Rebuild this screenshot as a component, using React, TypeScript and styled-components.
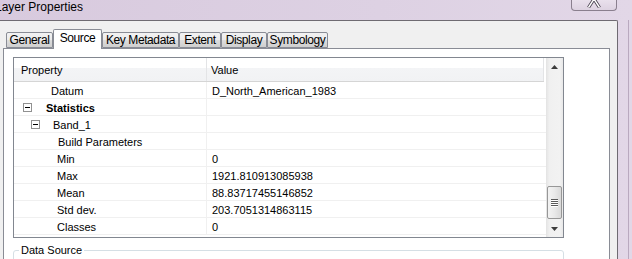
import React from 'react';
import styled, { createGlobalStyle } from 'styled-components';

const GlobalStyle = createGlobalStyle`
  html, body {
    margin: 0;
    padding: 0;
    background: #f0f0f0;
  }
  body {
    font-family: "Liberation Sans", Arial, sans-serif;
    font-size: 11px;
    color: #000;
  }
`;

const Window = styled.div`
  width: 632px;
  height: 259px;
  overflow: hidden;
  display: flex;
  flex-direction: column;
  background: linear-gradient(90deg, #d8cade 0%, #ddd1e3 60%, #e2d7e7 100%);
`;

const TitleBar = styled.div`
  height: 20px;
  flex: none;
  display: flex;
  align-items: flex-start;
  justify-content: space-between;
`;

const Title = styled.div`
  margin-left: -5px;
  font-size: 12px;
  line-height: 14px;
  color: #000;
`;

const CloseButton = styled.div`
  width: 44px;
  height: 10px;
  margin-right: 15px;
  border: 1px solid #8a7f8e;
  border-top: none;
  border-radius: 0 0 4px 4px;
  background: linear-gradient(#e9e0ec, #ddd2e1);
  display: flex;
  justify-content: center;
  align-items: flex-start;
`;

const Frame = styled.div`
  flex: 1;
  display: flex;
  min-height: 0;
`;

const Client = styled.div`
  width: 618px;
  flex: none;
  box-sizing: border-box;
  background: #f0f0f0;
  border-top: 1px solid #6f6b72;
  border-right: 1px solid #6f6b72;
  border-top-right-radius: 2px;
  display: flex;
  flex-direction: column;
`;

const SideFrame = styled.div`
  flex: 1;
  display: flex;
  justify-content: flex-end;
  padding-right: 3px;
`;

const SideLine = styled.div`
  width: 1px;
  background: #b9a9bf;
`;

const TabStrip = styled.div`
  height: 27px;
  flex: none;
  display: flex;
  align-items: flex-end;
  padding-left: 6px;
  position: relative;
  z-index: 1;
`;

const Tab = styled.div<{ $w: number; $active?: boolean }>`
  width: ${p => p.$w}px;
  height: ${p => (p.$active ? 20 : 16)}px;
  margin-bottom: ${p => (p.$active ? -1 : 0)}px;
  box-sizing: border-box;
  border: 1px solid #898c95;
  border-bottom: ${p => (p.$active ? 'none' : '1px solid #898c95')};
  border-radius: 2px 2px 0 0;
  background: ${p =>
    p.$active ? '#ffffff' : 'linear-gradient(#f2f2f2 0%, #ebebeb 50%, #dddddd 51%, #cfcfcf 100%)'};
  display: flex;
  align-items: center;
  justify-content: center;
  padding-bottom: ${p => (p.$active ? 3 : 0)}px;
  letter-spacing: -0.4px;
  font-size: 12px;
  white-space: nowrap;
`;

const TabPage = styled.div`
  margin-left: 3px;
  width: 607px;
  flex: 1;
  box-sizing: border-box;
  background: #ffffff;
  border: 1px solid #898c95;
  border-bottom: none;
  padding: 8px 0 0 9px;
`;

const Grid = styled.div`
  width: 551px;
  height: 181px;
  box-sizing: border-box;
  border: 1px solid #828790;
  display: flex;
`;

const Table = styled.div`
  flex: 1;
  display: flex;
  flex-direction: column;
`;

const HeaderRow = styled.div`
  height: 24px;
  flex: none;
  box-sizing: border-box;
  display: flex;
  border-bottom: 1px solid #d5d5d5;
  background: linear-gradient(#ffffff 0%, #ffffff 42%, #f3f4f6 43%, #f1f2f4 100%);
  margin-right: 2px;
`;

const HeaderCell = styled.div<{ $w?: number }>`
  ${p => (p.$w ? `width: ${p.$w}px; flex: none;` : 'flex: 1;')}
  box-sizing: border-box;
  display: flex;
  align-items: center;
  padding-left: ${p => (p.$w ? 7 : 4)}px;
  padding-top: 1px;
  border-right: 1px solid #e3e4e6;
`;

const Row = styled.div`
  height: 17px;
  flex: none;
  box-sizing: border-box;
  display: flex;
  border-bottom: 1px solid #f0f0f0;
`;

const PropCell = styled.div<{ $indent: number; $bold?: boolean }>`
  width: 193px;
  flex: none;
  box-sizing: border-box;
  border-right: 1px solid #f0f0f0;
  display: flex;
  align-items: center;
  padding-left: ${p => p.$indent}px;
  padding-top: 2px;
  font-weight: ${p => (p.$bold ? 'bold' : 'normal')};
  white-space: nowrap;
`;

const ValueCell = styled.div`
  flex: 1;
  display: flex;
  align-items: center;
  padding-left: 5px;
  padding-top: 2px;
  white-space: nowrap;
`;

const Expander = styled.span`
  width: 9px;
  height: 9px;
  box-sizing: border-box;
  border: 1px solid #919191;
  background: #fff;
  display: inline-flex;
  align-items: center;
  justify-content: center;
  margin-top: -2px;
  &::after {
    content: '';
    width: 5px;
    height: 1px;
    background: #000;
  }
`;

const Gap = styled.span<{ $w: number }>`
  display: inline-block;
  width: ${p => p.$w}px;
`;

const ScrollBar = styled.div`
  width: 17px;
  flex: none;
  display: flex;
  flex-direction: column;
  background: linear-gradient(90deg, #e3e3e3 0%, #f0f0f0 20%, #f2f2f2 80%, #e8e8e8 100%);
`;

const ArrowButton = styled.div`
  height: 17px;
  flex: none;
  display: flex;
  align-items: center;
  justify-content: center;
`;

const Track = styled.div`
  flex: 1;
  display: flex;
  flex-direction: column;
`;

const Thumb = styled.div<{ $top: number }>`
  margin: ${p => p.$top}px 1px 0 1px;
  height: 33px;
  box-sizing: border-box;
  border: 1px solid #979797;
  border-radius: 2px;
  background: linear-gradient(90deg, #f3f3f3 0%, #e9e9e9 50%, #d9d9d9 100%);
  display: flex;
  flex-direction: column;
  align-items: center;
  justify-content: center;
  gap: 1px;
`;

const Grip = styled.div`
  width: 7px;
  height: 1px;
  background: #5a5a5a;
  box-shadow: 0 1px 0 #ffffff;
`;

const GroupBox = styled.fieldset`
  width: 551px;
  height: 30px;
  box-sizing: border-box;
  margin: 6px 0 0 0;
  padding: 0 5px;
  border: 1px solid #d5dfe5;
  border-radius: 3px;
`;

const Legend = styled.legend`
  padding: 0 2px;
  font-size: 11px;
  color: #000;
`;

type RowData = {
  name: string;
  value?: string;
  indent: number;
  expander?: boolean;
  bold?: boolean;
};

const rows: RowData[] = [
  { name: 'Datum', value: 'D_North_American_1983', indent: 37 },
  { name: 'Statistics', indent: 9, expander: true, bold: true },
  { name: 'Band_1', indent: 17, expander: true },
  { name: 'Build Parameters', indent: 44 },
  { name: 'Min', value: '0', indent: 43 },
  { name: 'Max', value: '1921.810913085938', indent: 43 },
  { name: 'Mean', value: '88.83717455146852', indent: 43 },
  { name: 'Std dev.', value: '203.7051314863115', indent: 43 },
  { name: 'Classes', value: '0', indent: 43 },
];

const tabs = [
  { label: 'General', w: 47 },
  { label: 'Source', w: 49, active: true },
  { label: 'Key Metadata', w: 77 },
  { label: 'Extent', w: 42 },
  { label: 'Display', w: 46 },
  { label: 'Symbology', w: 61 },
];

const App = () => {
  return (
    <>
      <GlobalStyle />
      <Window>
        <TitleBar>
          <Title>Layer Properties</Title>
          <CloseButton>
            <svg width="14" height="8" viewBox="0 0 14 8">
              <path d="M1.5 7.5 L7 -1 L12.5 7.5" fill="none" stroke="#4c4452" strokeWidth="3.2" />
              <path d="M1.5 7.5 L7 -1 L12.5 7.5" fill="none" stroke="#ffffff" strokeWidth="1.4" />
            </svg>
          </CloseButton>
        </TitleBar>
        <Frame>
          <Client>
            <TabStrip>
              {tabs.map(t => (
                <Tab key={t.label} $w={t.w} $active={t.active}>
                  {t.label}
                </Tab>
              ))}
            </TabStrip>
            <TabPage>
              <Grid>
                <Table>
                  <HeaderRow>
                    <HeaderCell $w={193}>Property</HeaderCell>
                    <HeaderCell>Value</HeaderCell>
                  </HeaderRow>
                  {rows.map(r => (
                    <Row key={r.name}>
                      <PropCell $indent={r.indent} $bold={r.bold}>
                        {r.expander && (
                          <>
                            <Expander />
                            <Gap $w={r.bold ? 14 : 13} />
                          </>
                        )}
                        {r.name}
                      </PropCell>
                      <ValueCell>{r.value}</ValueCell>
                    </Row>
                  ))}
                </Table>
                <ScrollBar>
                  <ArrowButton>
                    <svg width="7" height="4" viewBox="0 0 7 4">
                      <path d="M0 4 L3.5 0 L7 4 Z" fill="#3c3c3c" />
                    </svg>
                  </ArrowButton>
                  <Track>
                    <Thumb $top={111}>
                      <Grip />
                      <Grip />
                      <Grip />
                      <Grip />
                    </Thumb>
                  </Track>
                  <ArrowButton>
                    <svg width="7" height="4" viewBox="0 0 7 4">
                      <path d="M0 0 L7 0 L3.5 4 Z" fill="#3c3c3c" />
                    </svg>
                  </ArrowButton>
                </ScrollBar>
              </Grid>
              <GroupBox>
                <Legend>Data Source</Legend>
              </GroupBox>
            </TabPage>
          </Client>
          <SideFrame>
            <SideLine />
          </SideFrame>
        </Frame>
      </Window>
    </>
  );
};

export default App;
